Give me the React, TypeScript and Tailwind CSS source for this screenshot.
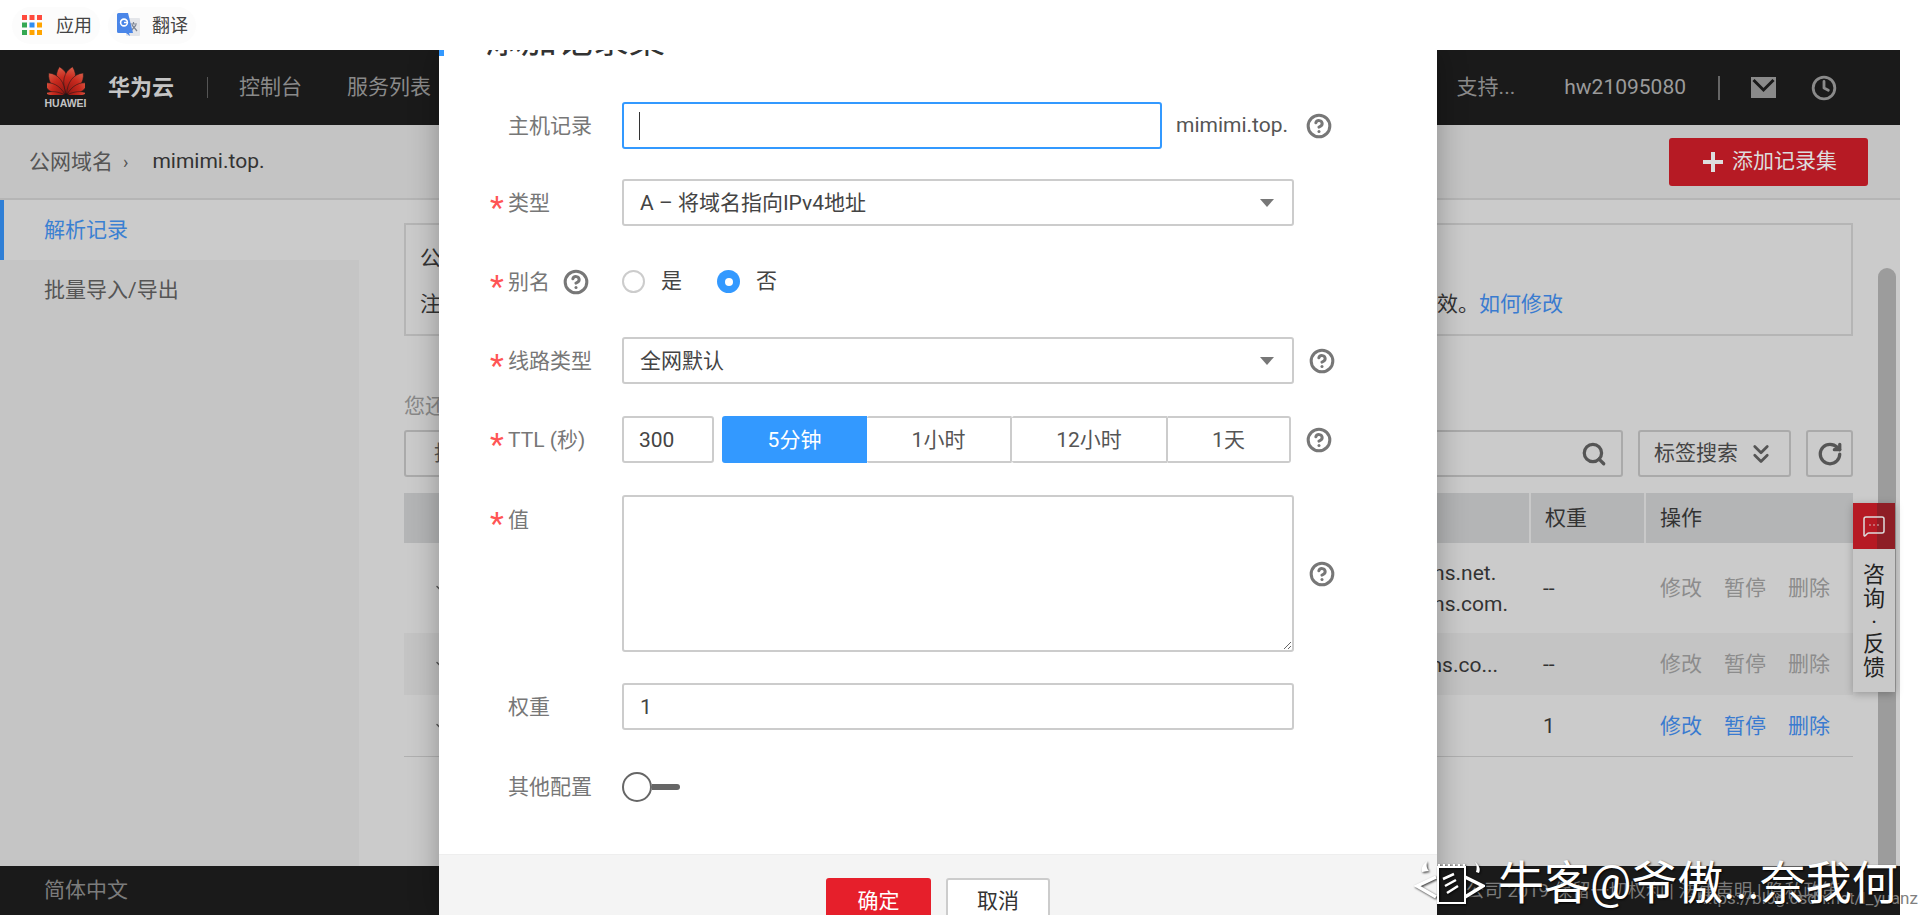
import React from 'react';
import { ChevronDown, ChevronsDown, CircleHelp, Clock, MessageSquareMore, RotateCw, Search } from 'lucide-react';

const Help = () => <CircleHelp size={26} strokeWidth={2.8} className="text-[#777] shrink-0" />;

function AppsIcon() {
  const cells = ['#ff4a3d', '#ff4a3d', '#ff4a3d', '#34a853', '#2f8cf0', '#ffa400', '#34a853', '#ffa400', '#ffa400'];
  return (
    <svg width="20" height="20" viewBox="0 0 20 20">
      {cells.map((c, i) => (
        <rect key={i} x={(i % 3) * 7.5} y={Math.floor(i / 3) * 7.5} width="5" height="5" fill={c} />
      ))}
    </svg>
  );
}

function TranslateIcon() {
  return (
    <svg width="23" height="24" viewBox="0 0 23 24">
      <rect x="9" y="5" width="14" height="18" rx="1" fill="#e4e6ea" />
      <path d="M13 11h7M16.5 9v2M14 18l5-6M15 12l5 6" stroke="#7d8695" strokeWidth="1.2" fill="none" />
      <path d="M1.5 0H11l5 20-4 0 1 3-4-3H1.5A1.5 1.5 0 0 1 0 18.500V1.500A1.500 1.500 0 0 1 1.500 0z" fill="#4a86e8" />
      <circle cx="7" cy="9.500" r="3.400" fill="none" stroke="#fff" strokeWidth="1.600" />
      <path d="M7 9.500h3.600" stroke="#fff" strokeWidth="1.400" />
    </svg>
  );
}

function HuaweiLogo() {
  const petals = [
    { a: -13, l: 29, w: 7.5 },
    { a: 13, l: 29, w: 7.5 },
    { a: -38, l: 28, w: 7 },
    { a: 38, l: 28, w: 7 },
    { a: -62, l: 25, w: 5.500 },
    { a: 62, l: 25, w: 5.500 },
    { a: -85, l: 21, w: 3 },
    { a: 85, l: 21, w: 3 },
  ];
  return (
    <div className="flex flex-col items-center w-[39px]">
      <svg width="38" height="29" viewBox="0 0 38 29">
        <defs>
          <linearGradient id="hw" x1="0" y1="1" x2="0" y2="0">
            <stop offset="0" stopColor="#8c1410" />
            <stop offset="0.6" stopColor="#c92a1e" />
            <stop offset="1" stopColor="#d9604a" />
          </linearGradient>
        </defs>
        {petals.map((p, i) => (
          <path
            key={i}
            transform={`translate(19 29) rotate(${p.a})`}
            d={`M0 -1 C${-p.w} ${-p.l * 0.4} ${-p.w} ${-p.l * 0.75} 0 ${-p.l} C${p.w} ${-p.l * 0.75} ${p.w} ${-p.l * 0.4} 0 -1`}
            fill="url(#hw)"
            stroke="#1a1a1a"
            strokeWidth="0.5"
          />
        ))}
      </svg>
      <span className="mt-[3px] text-[10.500px] leading-[11px] font-bold text-[#c4c4c4] [font-family:'Liberation_Sans',sans-serif]">HUAWEI</span>
    </div>
  );
}

function NowcoderLogo() {
  return (
    <svg width="71" height="46" viewBox="0 0 71 46" className="[filter:drop-shadow(1px_1px_1px_rgba(0,0,0,0.8))] shrink-0">
      <path d="M22 17 L3 26 L22 37" stroke="#fff" strokeWidth="3.500" fill="none" />
      <path d="M8 12 C7 8 9 4 13 1 C12 6 13 9 15 11 Z" fill="#fff" />
      <path d="M62 12 C63 9 63 5 61 2 C65 5 67 9 65 13 Z" fill="#fff" />
      <path d="M51 17 L69 26 L51 37" stroke="#fff" strokeWidth="3.500" fill="none" />
      <rect x="24" y="7" width="27" height="36" fill="none" stroke="#fff" strokeWidth="2" />
      <path d="M25 7v-3M30 7v-3M35 7v-3M40 7v-3M45 7v-3M50 7v-3" stroke="#fff" strokeWidth="2" />
      <path d="M40 14 L29 19 M42 20 L31 26 M44 26 L33 33" stroke="#fff" strokeWidth="2.500" fill="none" />
    </svg>
  );
}

function Label({ text, required }: { text: string; required?: boolean }) {
  return (
    <div className="flex items-center shrink-0 text-[21px] text-[#777] pt-[3px]">
      <span className="w-[18px] text-[#f55] text-[32px] leading-none h-[21px] -translate-y-[3px]">{required ? '*' : ''}</span>
      <span>{text}</span>
    </div>
  );
}

function SelectBox({ value }: { value: string }) {
  return (
    <div className="w-[672px] h-[47px] border-2 border-[#ccc] rounded-[3px] flex items-center justify-between pl-[16px] pr-[18px] text-[21px] text-[#444]">
      <span className="pt-[2px]">{value}</span>
      <span className="w-0 h-0 border-x-[7px] border-x-transparent border-t-[8px] border-t-[#777]" />
    </div>
  );
}

const ops = ['修改', '暂停', '删除'];

function TableRow({ className, lines, lineClass, weight, active }: { className: string; lines: string[]; lineClass: string; weight: string; active?: boolean }) {
  return (
    <div className={`flex items-center text-[21px] text-[#333] ${className}`}>
      <div className="flex-1 flex items-center pl-[30px]">
        <ChevronDown size={12} strokeWidth={3} className="text-[#555]" />
        <div className={`ml-auto whitespace-nowrap leading-[31px] pt-[2px] ${lineClass}`}>
          {lines.map(l => <div key={l}>{l}</div>)}
        </div>
      </div>
      <div className="w-[115px] pl-[14px] pt-[2px]">{weight}</div>
      <div className={`w-[209px] pl-[16px] pt-[2px] flex gap-[22px] ${active ? 'text-[#3a7bd0]' : 'text-[#8c8c8c]'}`}>
        {ops.map(o => <span key={o}>{o}</span>)}
      </div>
    </div>
  );
}

export default function App() {
  return (
    <div className="relative w-[1918px] h-[915px] overflow-hidden bg-white [font-family:Roboto,'Noto_Sans_CJK_SC',sans-serif]">
      {/* bookmarks */}
      <div className="h-[50px] flex items-center pl-[12px] text-[18px] text-[#444]">
        <div className="h-[37px] w-[88px] rounded-full bg-[#fcfcfc] flex items-center pl-[10px] gap-[14px]">
          <AppsIcon />
          <span>应用</span>
        </div>
        <div className="ml-[8px] h-[37px] w-[88px] rounded-full bg-[#fcfcfc] flex items-center pl-[9px] gap-[12px]">
          <TranslateIcon />
          <span>翻译</span>
        </div>
      </div>

      <div className="w-[1900px]">
        {/* top nav */}
        <div className="h-[75px] bg-[#1a1a1a] flex items-center pl-[46px] pr-[63px] text-[#8a8a8a] text-[21px]">
          <HuaweiLogo />
          <span className="ml-[23px] text-[22px] font-bold text-[#c4c4c4]">华为云</span>
          <span className="ml-[33px] w-[1px] h-[21px] bg-[#555]" />
          <span className="ml-[31px]">控制台</span>
          <span className="ml-[45px]">服务列表</span>
          <span className="ml-auto">支持...</span>
          <span className="ml-[49px] text-[#9a9a9a]">hw21095080</span>
          <span className="ml-[32px] w-[2px] h-[24px] bg-[#666]" />
          <svg width="25" height="21" viewBox="0 0 25 21" className="ml-[31px]">
            <rect width="25" height="21" fill="#8a8a8a" />
            <path d="M2.500 3 L12.500 13 L22.500 3" stroke="#1a1a1a" strokeWidth="3" fill="none" />
          </svg>
          <Clock size={26} strokeWidth={2.600} className="ml-[35px] text-[#8a8a8a]" />
        </div>

        {/* breadcrumb */}
        <div className="h-[75px] bg-[#c4c4c4] border-b-2 border-[#b5b5b5] flex items-center pl-[29px] pr-[32px] text-[21px]">
          <span className="text-[#555] pt-[2px]">公网域名</span>
          <span className="ml-[10px] text-[#555] text-[18px]">›</span>
          <span className="ml-[24px] text-[#333] pt-[1px]">mimimi.top.</span>
          <button className="ml-auto w-[199px] h-[48px] bg-[#b61a24] rounded-[3px] flex items-center pl-[34px] text-[#ddd] text-[21px]">
            <span className="relative w-[20px] h-[20px] mr-[9px]">
              <span className="absolute left-[8px] top-0 w-[4px] h-[20px] bg-[#ddd]" />
              <span className="absolute left-0 top-[8px] w-[20px] h-[4px] bg-[#ddd]" />
            </span>
            添加记录集
          </button>
        </div>

        {/* body */}
        <div className="h-[666px] flex bg-[#cbcbcb]">
          <div className="w-[359px] flex flex-col text-[21px]">
            <div className="h-[60px] border-l-4 border-[#2f7fd6] pl-[40px] pt-[2px] flex items-center text-[#3a80d2]">解析记录</div>
            <div className="flex-1 bg-[#c5c5c5] pl-[44px] pt-[15px] text-[#555]">批量导入/导出</div>
          </div>

          <div className="flex-1 pl-[45px] pr-[47px] pt-[23px] text-[21px]">
            <div className="h-[113px] border-2 border-[#b5b5b5] pl-[14px] pr-[288px] text-[#333]">
              <div className="mt-[18px] leading-[30px]">公网域名</div>
              <div className="mt-[16px] leading-[30px] flex justify-between">
                <span>注意</span>
                <span>效。<span className="text-[#3a7bd0]">如何修改</span></span>
              </div>
            </div>
            <div className="mt-[55px] leading-[30px] text-[#888]">您还可以添加记录集</div>
            <div className="mt-[9px] h-[47px] flex gap-[15px]">
              <div className="w-[120px] shrink-0 border-2 border-[#aaa] rounded-[3px] pl-[28px] flex items-center text-[#555]">批量</div>
              <div className="flex-1 border-2 border-[#aaa] rounded-[3px] flex items-center justify-end pr-[14px]">
                <Search size={26} strokeWidth={3} className="text-[#555]" />
              </div>
              <div className="w-[153px] border-2 border-[#aaa] rounded-[3px] flex items-center pl-[14px] gap-[8px] text-[#444]">
                标签搜索
                <ChevronsDown size={30} strokeWidth={2.200} className="text-[#555]" />
              </div>
              <div className="w-[47px] border-2 border-[#aaa] rounded-[3px] flex items-center justify-center">
                <RotateCw size={26} strokeWidth={3} className="text-[#555]" />
              </div>
            </div>
            <div className="mt-[16px] h-[50px] bg-[#b4b5b6] flex items-center text-[#333]">
              <div className="flex-1" />
              <div className="w-[115px] h-full pl-[14px] pt-[2px] flex items-center border-l-2 border-[#c9c9c9]">权重</div>
              <div className="w-[209px] h-full pl-[14px] pt-[2px] flex items-center border-l-2 border-[#c9c9c9]">操作</div>
            </div>
            <TableRow className="h-[90px]" lines={['ns1.huaweicloud-dns.net.', 'ns1.huaweicloud-dns.com.']} lineClass="mr-[21px]" weight="--" />
            <TableRow className="h-[62px] bg-[#c4c4c4]" lines={['ns1.huaweicloud-dns.co...']} lineClass="mr-[31px]" weight="--" />
            <TableRow className="h-[62px] border-b border-[#b0b0b0]" lines={['']} lineClass="" weight="1" active />
          </div>
        </div>

        {/* footer */}
        <div className="h-[49px] bg-[#1a1a1a] flex items-center pl-[44px] pr-[60px] text-[#7c7c7c]">
          <span className="text-[21px]">简体中文</span>
          <span className="ml-auto text-[18.500px] pt-[3px]">公司 2019 保留一切权利 | 法律声明 | 隐私政策</span>
        </div>
      </div>

      {/* scrollbar */}
      <div className="absolute left-[1878px] top-[268px] w-[18px] h-[598px] bg-[#9c9c9c] rounded-t-full" />

      {/* consult widget */}
      <div className="absolute left-[1853px] top-[503px] w-[42px] h-[189px] bg-[#c9c9c9] shadow-[0_2px_8px_rgba(0,0,0,0.25)] text-[#222] text-[22px] leading-[24px] flex flex-col items-center">
        <div className="relative w-full h-[46px] bg-[#b61a24] flex items-center justify-center shrink-0">
          <div className="absolute right-0 top-0 w-[18px] h-full bg-[#8e1e26]" />
          <MessageSquareMore size={24} strokeWidth={1.500} className="relative text-[#ddd]" />
        </div>
        <span className="mt-[14px]">咨</span>
        <span>询</span>
        <span className="h-[21px]">·</span>
        <span>反</span>
        <span>馈</span>
      </div>

      {/* dialog */}
      <div className="absolute left-0 top-[50px] w-[1918px] h-[865px] overflow-hidden">
        <div className="ml-[439px] w-[998px] h-[865px] bg-white shadow-[0_0_28px_rgba(0,0,0,0.3)] flex flex-col">
          <div className="h-[52px] shrink-0 flex overflow-hidden">
            <span className="w-[5px] h-[6px] bg-[#39f] shrink-0" />
            <span className="ml-[41px] -mt-[27px] text-[36px] leading-[36px] text-[#333] h-[36px]">添加记录集</span>
          </div>

          <div className="flex items-center pl-[51px]">
            <div className="w-[132px] shrink-0"><Label text="主机记录" /></div>
            <div className="w-[540px] h-[47px] border-2 border-[#39f] rounded-[3px] flex items-center pl-[15px]">
              <span className="w-[1px] h-[28px] bg-[#333]" />
            </div>
            <span className="ml-[14px] text-[21px] text-[#555]">mimimi.top.</span>
            <span className="ml-[18px]"><Help /></span>
          </div>

          <div className="mt-[30px] flex items-center pl-[51px]">
            <div className="w-[132px] shrink-0"><Label text="类型" required /></div>
            <SelectBox value="A – 将域名指向IPv4地址" />
          </div>

          <div className="mt-[32px] h-[47px] flex items-center pl-[51px]">
            <div className="w-[132px] shrink-0 flex items-center">
              <Label text="别名" required />
              <span className="ml-[13px]"><Help /></span>
            </div>
            <span className="w-[23px] h-[23px] rounded-full border-2 border-[#ccc]" />
            <span className="ml-[16px] text-[21px] text-[#444] pt-[1px]">是</span>
            <span className="ml-[35px] w-[23px] h-[23px] rounded-full bg-[#39f] flex items-center justify-center">
              <span className="w-[8px] h-[8px] rounded-full bg-white" />
            </span>
            <span className="ml-[16px] text-[21px] text-[#444] pt-[1px]">否</span>
          </div>

          <div className="mt-[32px] flex items-center pl-[51px]">
            <div className="w-[132px] shrink-0"><Label text="线路类型" required /></div>
            <SelectBox value="全网默认" />
            <span className="ml-[15px]"><Help /></span>
          </div>

          <div className="mt-[32px] flex items-center pl-[51px] text-[21px] text-[#555]">
            <div className="w-[132px] shrink-0"><Label text="TTL (秒)" required /></div>
            <input readOnly value="300" className="w-[92px] h-[47px] border-2 border-[#ccc] rounded-[3px] pl-[15px] text-[#444] outline-none" />
            <div className="ml-[8px] flex h-[47px] leading-[47px]">
              <div className="w-[145px] bg-[#39f] text-white rounded-l-[3px] flex items-center justify-center pt-[2px]">5分钟</div>
              <div className="w-[145px] border-2 border-l-0 border-[#ccc] rounded-[2px] flex items-center justify-center pt-[2px]">1小时</div>
              <div className="w-[156px] border-2 border-l-0 border-[#ccc] rounded-[2px] flex items-center justify-center pt-[2px]">12小时</div>
              <div className="w-[123px] border-2 border-l-0 border-[#ccc] rounded-r-[3px] flex items-center justify-center pt-[2px]">1天</div>
            </div>
            <span className="ml-[15px]"><Help /></span>
          </div>

          <div className="mt-[32px] flex pl-[51px]">
            <div className="w-[132px] shrink-0 pt-[7px]"><Label text="值" required /></div>
            <textarea readOnly className="w-[672px] h-[157px] border-2 border-[#ccc] rounded-[3px] outline-none" />
            <span className="ml-[15px] self-center"><Help /></span>
          </div>

          <div className="mt-[31px] flex items-center pl-[51px]">
            <div className="w-[132px] shrink-0"><Label text="权重" /></div>
            <input readOnly value="1" className="w-[672px] h-[47px] border-2 border-[#ccc] rounded-[3px] pl-[16px] text-[21px] text-[#444] outline-none" />
          </div>

          <div className="mt-[33px] h-[47px] flex items-center pl-[51px]">
            <div className="w-[132px] shrink-0"><Label text="其他配置" /></div>
            <span className="w-[30px] h-[30px] rounded-full border-2 border-[#666] bg-white shrink-0" />
            <span className="w-[28px] h-[6px] bg-[#666] rounded-r-full" />
          </div>

          <div className="mt-auto h-[61px] bg-[#f4f4f4] border-t border-[#eee] pl-[387px] pt-[23px] flex text-[21px] overflow-hidden">
            <button className="w-[105px] h-[48px] bg-[#e61f2b] text-white rounded-[3px]">确定</button>
            <button className="ml-[15px] w-[104px] h-[48px] bg-white border-2 border-[#ccc] rounded-[3px] text-[#333]">取消</button>
          </div>
        </div>
      </div>

      {/* watermarks */}
      <span className="absolute left-[1697px] top-[886px] text-[17px] leading-[24px] text-[#808080] whitespace-nowrap">https://blog.csdn.net/l_yuanzu</span>
      <div className="absolute left-[1414px] top-[857px] flex items-center text-white text-[46px] leading-[52px] whitespace-nowrap [text-shadow:1px_1px_2px_rgba(0,0,0,0.9)]">
        <NowcoderLogo />
        <span className="ml-[13px]">牛客@爷傲...奈我何</span>
      </div>
    </div>
  );
}
